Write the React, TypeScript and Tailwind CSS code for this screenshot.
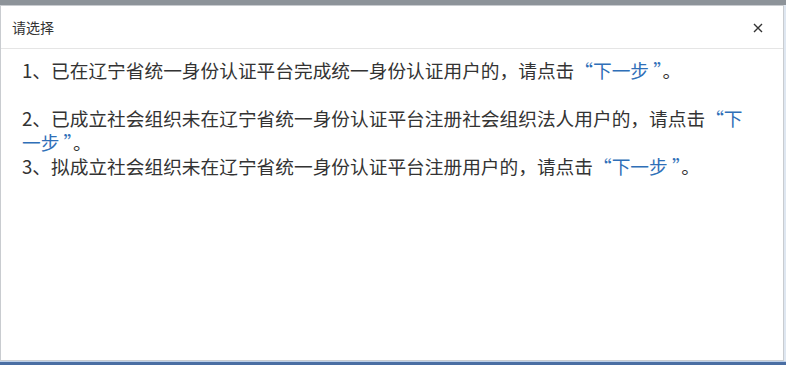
import React from "react";

const font = {
  fontFamily: '"Microsoft YaHei", "Noto Sans CJK SC", sans-serif',
};

const Next = () => <span className="text-[#2f6fb8]">“下一步 ”</span>;

export default function App() {
  return (
    <div
      className="flex h-[365px] w-[786px] flex-col overflow-hidden bg-[#4a6ea3] text-[#333]"
      style={font}
    >
      <div className="h-[5px] shrink-0 bg-[#8d9399]" />
      <div className="flex min-h-0 flex-1">
        <div className="flex flex-1 flex-col border border-[#c9ccd0] bg-white">
          <div className="flex h-[43px] shrink-0 items-center justify-between border-b border-[#e5e5e5] pl-[11px] pr-[20px] pt-[1px]">
            <span className="text-[14px]">请选择</span>
            <svg width="10" height="10" viewBox="0 0 10 10" className="text-[#333]">
              <path d="M1 1L9 9M9 1L1 9" stroke="currentColor" strokeWidth="1.4" />
            </svg>
          </div>
          <div className="px-[21px] pt-[9px] text-[18.7px] leading-[24px]">
            <p className="mb-[24px]">
              1、已在辽宁省统一身份认证平台完成统一身份认证用户的，请点击<Next />。
            </p>
            <p className="w-[735px]">
              2、已成立社会组织未在辽宁省统一身份认证平台注册社会组织法人用户的，请点击<Next />。
            </p>
            <p>
              3、拟成立社会组织未在辽宁省统一身份认证平台注册用户的，请点击<Next />。
            </p>
          </div>
        </div>
        <div className="w-[2px] shrink-0 bg-[#dfe7f1]" />
      </div>
      <div className="h-[4px] shrink-0 border-t border-[#bcd0ea] bg-[#4a6ea3]" />
    </div>
  );
}
